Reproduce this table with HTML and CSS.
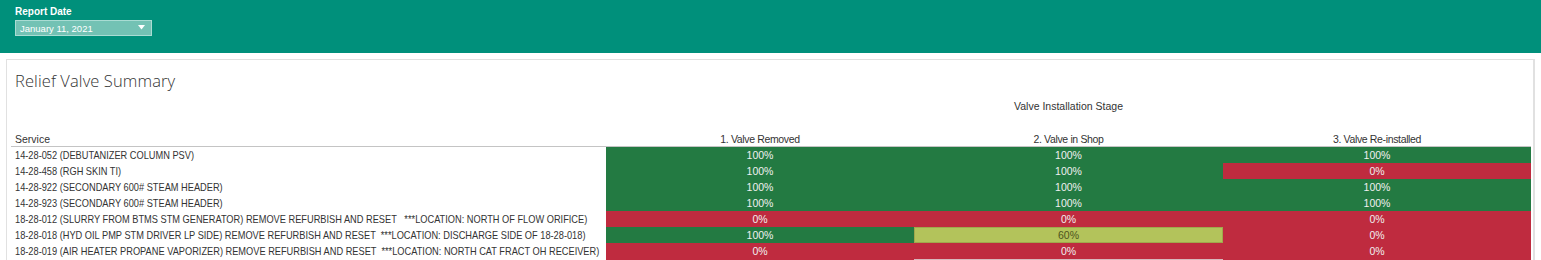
FILE: index.html
```html
<!DOCTYPE html>
<html>
<head>
<meta charset="utf-8">
<link rel="stylesheet" href="styles.css">
</head>
<body>
<header class="topbar">
  <div class="filter-label">Report Date</div>
  <div class="dropdown">
    <span>January 11, 2021</span>
    <svg class="caret" width="7" height="5" viewBox="0 0 7 5"><path d="M0 0H7L3.5 4.5Z" fill="#fff"/></svg>
  </div>
</header>
<section class="card">
  <h1 class="title">Relief Valve Summary</h1>
  <div class="table">
    <div class="stage"><span></span><span class="stage-label">Valve Installation Stage</span></div>
    <div class="row head">
      <div class="svc">Service</div>
      <div class="colh">1. Valve Removed</div>
      <div class="colh">2. Valve in Shop</div>
      <div class="colh">3. Valve Re-installed</div>
    </div>
    <div class="body">
      <div class="row"><div class="svc"><span>14-28-052 (DEBUTANIZER COLUMN PSV)</span></div><div class="c g">100%</div><div class="c g">100%</div><div class="c g">100%</div></div>
      <div class="row"><div class="svc"><span>14-28-458 (RGH SKIN TI)</span></div><div class="c g">100%</div><div class="c g">100%</div><div class="c r">0%</div></div>
      <div class="row"><div class="svc"><span>14-28-922 (SECONDARY 600# STEAM HEADER)</span></div><div class="c g">100%</div><div class="c g">100%</div><div class="c g">100%</div></div>
      <div class="row"><div class="svc"><span>14-28-923 (SECONDARY 600# STEAM HEADER)</span></div><div class="c g">100%</div><div class="c g">100%</div><div class="c g">100%</div></div>
      <div class="row"><div class="svc"><span>18-28-012 (SLURRY FROM BTMS STM GENERATOR) REMOVE REFURBISH AND RESET &nbsp; ***LOCATION: NORTH OF FLOW ORIFICE)</span></div><div class="c r">0%</div><div class="c r">0%</div><div class="c r">0%</div></div>
      <div class="row"><div class="svc"><span>18-28-018 (HYD OIL PMP STM DRIVER LP SIDE) REMOVE REFURBISH AND RESET &nbsp;***LOCATION: DISCHARGE SIDE OF 18-28-018)</span></div><div class="c g">100%</div><div class="c y">60%</div><div class="c r">0%</div></div>
      <div class="row"><div class="svc"><span>18-28-019 (AIR HEATER PROPANE VAPORIZER) REMOVE REFURBISH AND RESET &nbsp;***LOCATION: NORTH CAT FRACT OH RECEIVER)</span></div><div class="c r">0%</div><div class="c r">0%</div><div class="c r">0%</div></div>
      <div class="row"><div class="svc"></div><div class="c r"></div><div class="c w"></div><div class="c r"></div></div>
    </div>
  </div>
</section>
</body>
</html>
```
FILE: styles.css
```css
* { box-sizing: border-box; }
html, body { margin: 0; padding: 0; background: #fff; overflow: hidden; }
body { font-family: "Liberation Sans", Arial, sans-serif; color: #333; }

.topbar {
  height: 53px;
  background: #00907b;
  padding: 5px 15px 0;
}
.filter-label {
  color: #fff;
  font-weight: bold;
  font-size: 10px;
  line-height: 13px;
  height: 14px;
}
.dropdown {
  margin-top: 1px;
  width: 137px;
  height: 16px;
  background: #73c2b4;
  border: 1px solid #a9dcd3;
  display: flex;
  align-items: center;
  justify-content: space-between;
  padding: 0 6px 0 4px;
  color: #fff;
  font-size: 9.5px;
}
.caret { display: block; margin-top: -2px; }

.card {
  margin: 6px 6px 0 6px;
  border: 1px solid #e1e1e1;
  border-right-width: 2px;
  height: 220px;
  padding: 9px 2px 0 4px;
}
.title {
  margin: 0 0 0 4px;
  font-family: "Open Sans", sans-serif;
  font-weight: 300;
  font-size: 16.5px;
  line-height: 24px;
  color: #333;
  letter-spacing: 0.1px;
}
.table { margin-top: 6px; width: 1520px; }
.stage {
  display: grid;
  grid-template-columns: 595px 1fr;
  font-size: 10.5px;
  line-height: 14px;
  height: 34px;
}
.stage-label { text-align: center; }

.row {
  display: grid;
  grid-template-columns: 595px 308px 309px 308px;
  height: 16px;
  font-size: 10.5px;
  line-height: 16px;
}
.head { height: 14px; line-height: 13px; border-bottom: 1px solid #c4c4c4; }
.colh { text-align: center; letter-spacing: -0.35px; }
.svc { padding-left: 4px; white-space: nowrap; overflow: hidden; }
.svc span {
  display: inline-block;
  transform: scaleX(0.88);
  transform-origin: 0 50%;
}
.c { text-align: center; color: #f0f0f0; }
.g { background: #237a42; }
.r { background: #bf2b3f; }
.y { background: #b3c35b; color: #4d5320; border: 1px solid #a0a84c; line-height: 14px; }
.w { background: #fff; border: 1px solid #d8b7bc; }
```
